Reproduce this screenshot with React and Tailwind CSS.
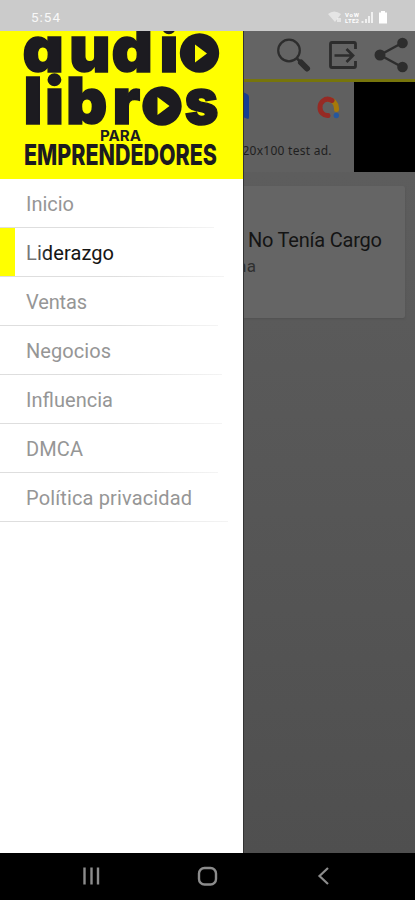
const menuItems = [
    { label: "Inicio", width: "w-[48px]", line: "w-[214px]" },
    { label: "Liderazgo", width: "w-[88px]", line: "w-[224px]" },
    { label: "Ventas", width: "w-[61px]", line: "w-[218px]" },
    { label: "Negocios", width: "w-[85px]", line: "w-[222px]" },
    { label: "Influencia", width: "w-[87px]", line: "w-[222px]" },
    { label: "DMCA", width: "w-[57px]", line: "w-[218px]" },
    { label: "Política privacidad", width: "w-[166px]", line: "w-[228px]" },
];

function StatusBar() {
    return (
        <div className="flex h-[31px] shrink-0 items-center justify-between bg-[#cbcbcb] pl-[31px] pr-[26px] pt-[3px] text-[13.5px] text-[#f8f8f8]">
            <svg width="30" height="16">
                <text x="0" y="13" textLength="29" fill="#f8f8f8">5:54</text>
            </svg>
            <svg width="61" height="14" viewBox="0 0 61 14" fill="white">
                <path d="M0 4 Q6 -1 13 4 L7 12 Z" opacity=".5" />
                <path d="M9 8h4v4H9z" opacity=".5" />
                <text x="17" y="6.500" fontSize="6" fontWeight="700" textLength="14">VoW</text>
                <text x="17" y="13" fontSize="6" fontWeight="700" textLength="14">LTE2</text>
                <path d="M33.500 11h2v2h-2zM37 9h2v4h-2zM40 6h2v7h-2zM43 2h2v11h-2z" opacity=".7" />
                <path d="M53 1h4v1.500h2v11h-8v-11h2z" />
            </svg>
        </div>
    );
}

function Logo() {
    return (
        <svg width="243" height="148" viewBox="0 31 243 148" className="block" fill="#1c1b20">
            <g fontFamily="Inter, sans-serif" fontWeight="900">
                <g fontSize="64" stroke="#1c1b20" strokeWidth="1.500" style={{ fontFeatureSettings: '"cv11"' }}>
                    <text x="22.500 69 111.500 159.500" y="71.500">audi</text>
                    <text x="23.500 45 66 112.500" y="124">libr</text>
                    <text x="184.500" y="124" textLength="34" lengthAdjust="spacingAndGlyphs">s</text>
                </g>
                <text x="100" y="140.500" fontSize="14" fontWeight="700" textLength="41" lengthAdjust="spacingAndGlyphs">PARA</text>
                <text x="24" y="165" fontSize="29" fontWeight="800" textLength="193" lengthAdjust="spacingAndGlyphs">EMPRENDEDORES</text>
            </g>
            <circle cx="199.500" cy="53" r="19.700" />
            <path d="M195 44.500v18l12-9z" fill="#ffff00" />
            <circle cx="162" cy="106" r="19.700" />
            <path d="M157.500 97v18l12-9z" fill="#ffff00" />
        </svg>
    );
}

function Drawer() {
    return (
        <aside className="w-[243px] shrink-0 bg-white">
            <div className="h-[148px] bg-[#ffff00]">
                <Logo />
            </div>
            <nav>
                {menuItems.map((item) => {
                    const active = item.label === "Liderazgo";
                    return (
                        <div key={item.label} className="flex h-[49px] flex-col">
                            <div className="flex min-h-0 grow items-center">
                                <div className={`h-full w-[15px] ${active ? "bg-[#ffff00]" : ""}`} />
                                <svg height="28" className={`ml-[11px] overflow-visible ${item.width}`}>
                                    {/* the touch ripple still fades over the first letters of the active row */}
                                    <linearGradient id="ripple">
                                        <stop offset="0.1" stopColor="#777777" />
                                        <stop offset="0.24" stopColor="#161616" />
                                    </linearGradient>
                                    <text
                                        y="22"
                                        textLength="100%"
                                        className="text-[20px]"
                                        fill={active ? "url(#ripple)" : "#969696"}
                                    >
                                        {item.label}
                                    </text>
                                </svg>
                            </div>
                            <div className={`h-px shrink-0 bg-linear-to-r from-[#dedede] from-50% to-[#f4f4f4] ${item.line}`} />
                        </div>
                    );
                })}
            </nav>
        </aside>
    );
}

function Toolbar() {
    return (
        <div className="h-[51px] border-b-[3px] border-[#77750c] bg-[#646464]">
            <svg width="171" height="48" viewBox="244 31 171 48" fill="none" stroke="#2d2d2d">
                <circle cx="289" cy="50.500" r="10.800" strokeWidth="2.200" />
                <path d="M297 58.500l4 4" strokeWidth="2.500" />
                <path d="M301 62.500l6 6" strokeWidth="6" strokeLinecap="round" />
                <path d="M355.500 49v-5q0-1.500-1.500-1.500h-22q-1.500 0-1.500 1.500v22q0 1.500 1.500 1.500h22q1.500 0 1.500-1.500v-5" strokeWidth="2.800" />
                <path d="M334.500 55.500h18M346.500 49l6.500 6.500-6.500 6.500" strokeWidth="2.700" />
                <path d="M402 43l-22 12 22 12" strokeWidth="2.400" />
                <g fill="#2d2d2d" stroke="none">
                    <circle cx="402.500" cy="43" r="5.300" />
                    <circle cx="380" cy="55" r="5.500" />
                    <circle cx="402.500" cy="67" r="5.300" />
                </g>
            </svg>
        </div>
    );
}

function AdBanner() {
    return (
        <div className="flex h-[90px] bg-black">
            <div className="w-[110px] bg-[#606060]">
                <svg width="110" height="90" viewBox="244 82 110 90">
                    <path d="M243 92l4 2q2 1 2 3v20q0 2-1 2l-5-2z" fill="#173f91" />
                    <g fill="none" strokeWidth="5" strokeLinecap="round">
                        <path d="M329 99.500q7 1 7.500 9v1" stroke="#a77908" />
                        <path d="M332 100.500c-7-4-12 2-12 7s4 8.500 8 8" stroke="#962a24" />
                    </g>
                    <circle cx="336.300" cy="115.500" r="2.700" fill="#25579e" />
                    <text x="242.500" y="155" fontSize="12" textLength="89" fill="#1f1f1f" fontFamily="Noto Sans, sans-serif">20x100 test ad.</text>
                </svg>
            </div>
        </div>
    );
}

function Content() {
    return (
        <main className="min-w-0 grow overflow-hidden border-l border-[#333333] bg-linear-to-b from-[#606060] to-[#4f4f4f]">
            <Toolbar />
            <AdBanner />
            <div className="mr-[10px] mt-[14px] h-[132px] rounded-r-[2px] bg-[#656565] shadow-[0_1px_2px_#525252]">
                <svg width="161" height="132" viewBox="244 186 161 132">
                    <text x="248" y="246.500" fontSize="20" textLength="134" fill="#141414">No Tenía Cargo</text>
                    <text x="237" y="272" fontSize="17" textLength="19" fill="#303030">na</text>
                </svg>
            </div>
        </main>
    );
}

function NavigationBar() {
    return (
        <div className="h-[47px] shrink-0 bg-black">
            <svg width="415" height="47" viewBox="0 853 415 47" fill="none" stroke="#8c8c8c">
                <path d="M84.500 867.500v17M91.500 867.500v17M98 867.500v17" strokeWidth="2.400" />
                <rect x="199" y="868" width="17" height="16.500" rx="5.500" strokeWidth="2.400" />
                <path d="M328 868l-8.500 8 8.500 8" strokeWidth="2.200" />
            </svg>
        </div>
    );
}

export default function App() {
    return (
        <div className="flex h-[900px] w-[415px] flex-col overflow-hidden bg-black font-[Roboto,sans-serif]">
            <StatusBar />
            <div className="flex h-[822px] shrink-0">
                <Drawer />
                <Content />
            </div>
            <NavigationBar />
        </div>
    );
}
